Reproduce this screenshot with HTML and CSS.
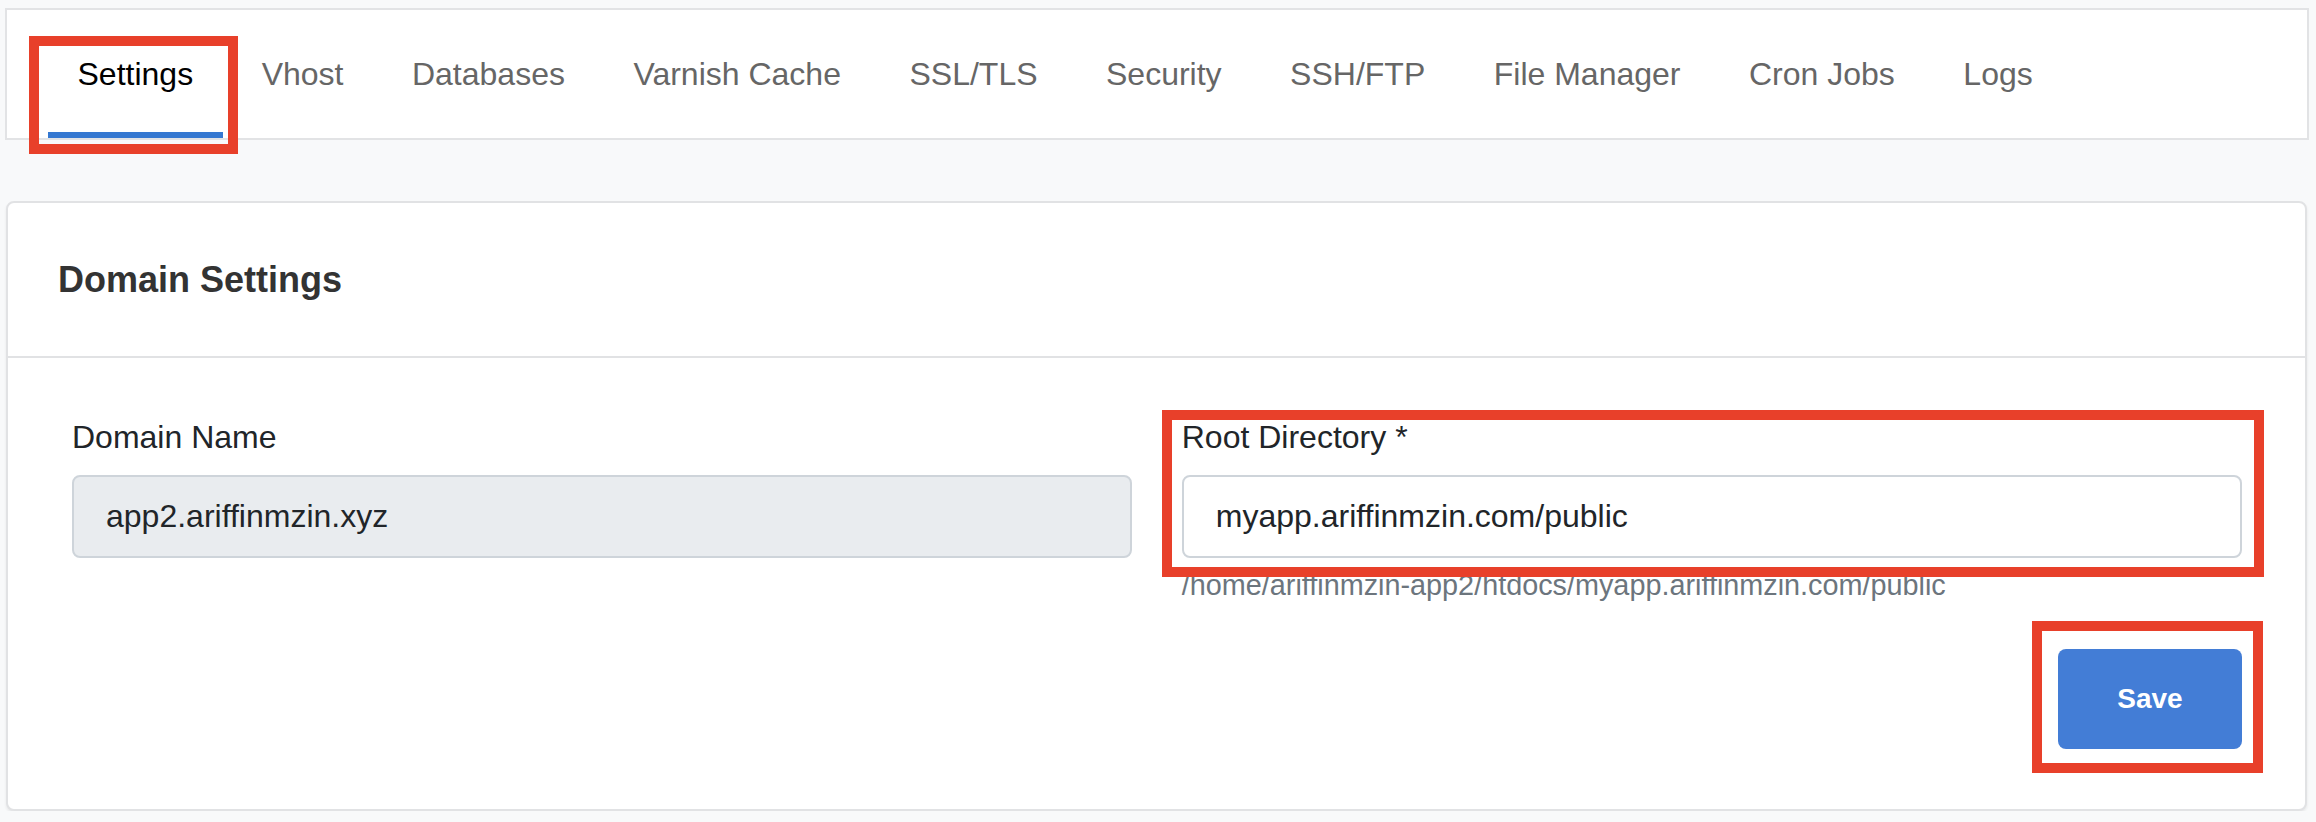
FILE: index.html
```html
<!DOCTYPE html>
<html lang="en">
<head>
<meta charset="utf-8">
<title>Domain Settings</title>
<link rel="stylesheet" href="styles.css">
</head>
<body>
<div class="page">
  <nav class="tabs">
    <a class="tab active mark mark-tab">Settings</a>
    <a class="tab">Vhost</a>
    <a class="tab">Databases</a>
    <a class="tab">Varnish Cache</a>
    <a class="tab">SSL/TLS</a>
    <a class="tab">Security</a>
    <a class="tab">SSH/FTP</a>
    <a class="tab">File Manager</a>
    <a class="tab">Cron Jobs</a>
    <a class="tab">Logs</a>
  </nav>

  <section class="card">
    <header class="card-header">
      <h2 class="card-title">Domain Settings</h2>
    </header>
    <div class="card-body">
      <div class="grid">
        <div class="col">
          <div class="field">
            <label class="label">Domain Name</label>
            <div class="input disabled">app2.ariffinmzin.xyz</div>
          </div>
        </div>
        <div class="col">
          <div class="field mark mark-field">
            <label class="label">Root Directory *</label>
            <div class="input">myapp.ariffinmzin.com/public</div>
          </div>
          <div class="help">/home/ariffinmzin-app2/htdocs/myapp.ariffinmzin.com/public</div>
          <div class="actions">
            <button class="btn mark mark-btn">Save</button>
          </div>
        </div>
      </div>
    </div>
  </section>
</div>
</body>
</html>
```

FILE: styles.css
```css
* { box-sizing: border-box; }

html, body {
  margin: 0;
  background: #f8f9fa;
  font-family: "Liberation Sans", Arial, Helvetica, sans-serif;
  color: #212529;
}

.page {
  position: relative;
  padding: 8px 0 0 0;
}

/* Tabs */
.tabs {
  display: flex;
  gap: 8.5px;
  height: 132px;
  margin: 0 7px 0 5px;
  padding-left: 40.5px;
  background: #fff;
  border: 2px solid #e2e3e5;
}

.tab {
  position: relative;
  display: flex;
  align-items: center;
  padding: 0 30px;
  font-size: 32px;
  color: #666;
  white-space: nowrap;
}

.tab.active {
  color: #000;
  box-shadow: inset 0 -6px 0 #3578d1;
}

/* Card */
.card {
  margin: 61px 9px 0 6px;
  background: #fff;
  border: 2px solid #e1e2e4;
  border-radius: 8px;
  box-shadow: 0 2px 3px rgba(0, 0, 0, 0.07);
}

.card-header {
  height: 155px;
  display: flex;
  align-items: center;
  padding-left: 50px;
  border-bottom: 2px solid #e1e2e4;
}

.card-title {
  margin: 0;
  font-size: 36px;
  font-weight: bold;
  color: #333;
}

.card-body {
  padding: 55px 63px 60px 64px;
}

.grid {
  display: grid;
  grid-template-columns: 1fr 1fr;
  column-gap: 49.5px;
}

.field {
  position: relative;
}

.label {
  display: block;
  font-size: 32px;
  line-height: 48px;
  margin-bottom: 14px;
  color: #212529;
}

.input {
  height: 82.5px;
  display: flex;
  align-items: center;
  padding-left: 32px;
  font-size: 32px;
  color: #212529;
  background: #fff;
  border: 2px solid #ced4da;
  border-radius: 8px;
}

.input.disabled {
  background: #e9ecef;
}

.help {
  margin-top: 6px;
  font-size: 28.8px;
  line-height: 43px;
  color: #6c757d;
  white-space: nowrap;
}

.actions {
  display: flex;
  justify-content: flex-end;
  margin-top: 42px;
}

.btn {
  position: relative;
  width: 184px;
  height: 100px;
  border: none;
  border-radius: 8px;
  background: #437dd6;
  color: #fff;
  font-family: "Liberation Sans", Arial, Helvetica, sans-serif;
  font-size: 28px;
  font-weight: bold;
}

/* Red annotation frames drawn over the UI */
.mark::after {
  content: "";
  position: absolute;
  border: 10px solid #e8402a;
  pointer-events: none;
}

.mark-tab::after {
  left: -18.5px;
  right: -15px;
  top: 26px;
  bottom: -16px;
}

.mark-field::after {
  left: -20px;
  right: -22px;
  top: -3px;
  bottom: -19px;
}

.mark-btn::after {
  left: -26px;
  right: -21px;
  top: -28px;
  bottom: -24px;
}
```
